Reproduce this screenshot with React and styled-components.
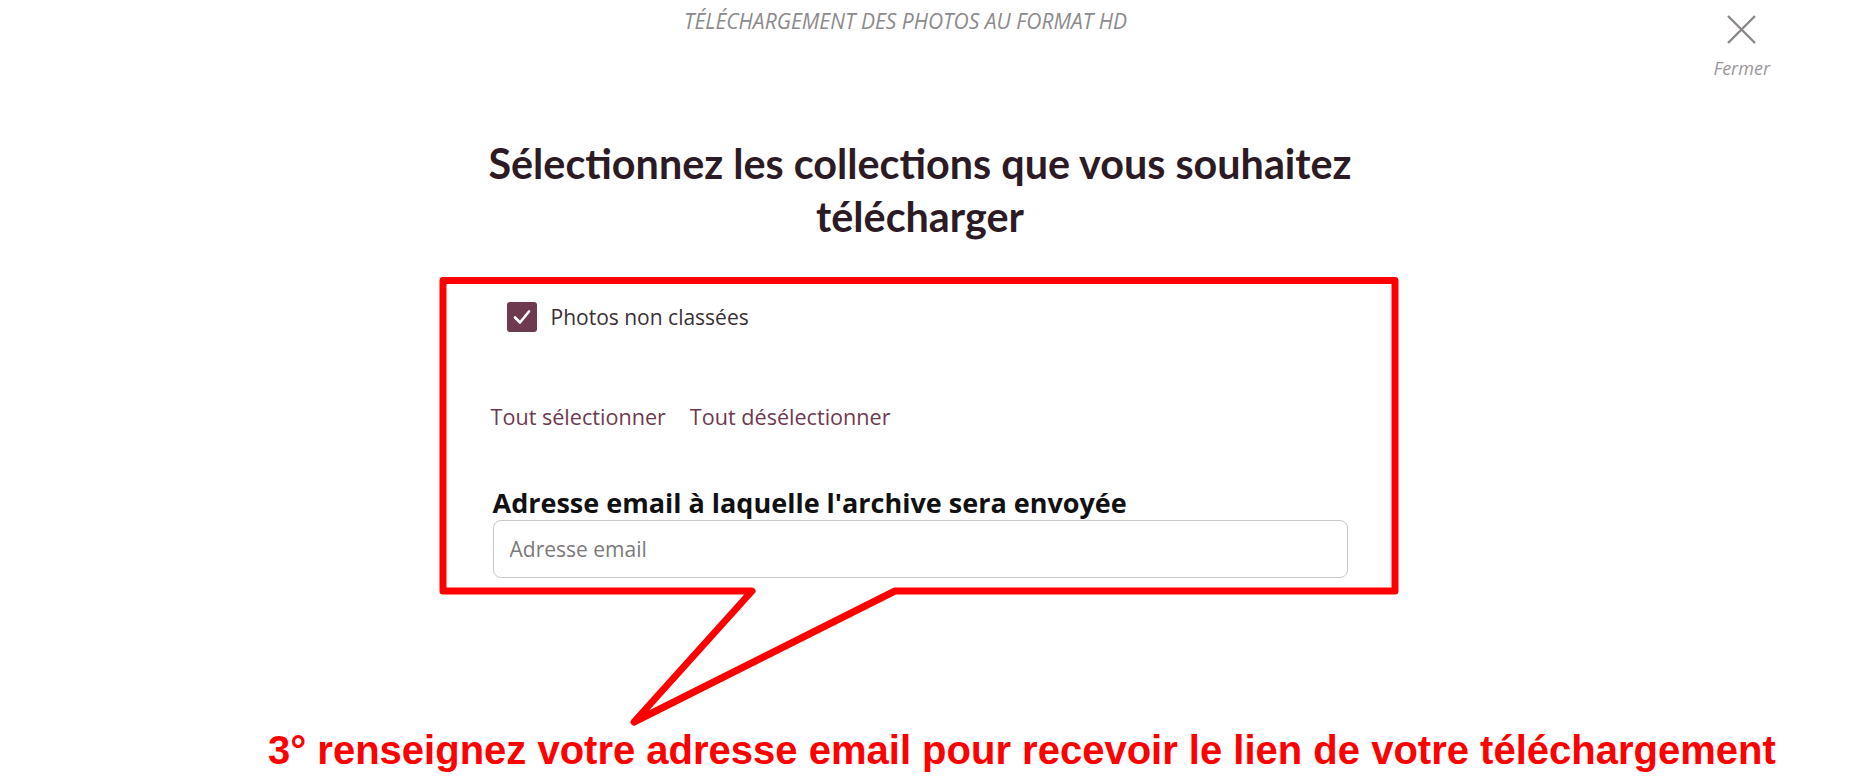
import React from 'react';
import styled, {createGlobalStyle} from "styled-components";

const GlobalStyle = createGlobalStyle`
  body {
    margin: 0;
    background: #ffffff;
    font-family: "Open Sans", "Noto Sans", sans-serif;
  }
`;

const Page = styled.div`
  position: relative;
  width: 100%;
  height: 781px;
  overflow: hidden;
  background: #fff;
`;

const TopBar = styled.div`
  display: grid;
  grid-template-columns: 1fr auto 1fr;
  height: 90px;
`;

const ModalTitle = styled.div`
  grid-column: 2;
  padding: 7px 40px 0 0;
  font-size: 21px;
  line-height: 28px;
  font-style: italic;
  color: #8c8a8c;
  text-transform: uppercase;
`;

const CloseButton = styled.button`
  grid-column: 3;
  justify-self: end;
  align-self: start;
  display: flex;
  flex-direction: column;
  align-items: center;
  gap: 12px;
  margin: 14px 81px 0 0;
  padding: 0;
  border: 0;
  background: none;
  cursor: pointer;
  font-family: inherit;
  font-style: italic;
  font-size: 18px;
  line-height: 22px;
  color: #9a9799;
`;

const Content = styled.div`
  width: 855px;
  margin-left: calc(50% - 433px);
`;

const Heading = styled.h1`
  margin: 47px -60px 0;
  font-family: Lato, "Open Sans", sans-serif;
  font-weight: 700;
  font-size: 41.3px;
  line-height: 53px;
  color: #2c1a25;
  text-align: center;
`;

const CheckRow = styled.label`
  display: flex;
  align-items: center;
  gap: 14px;
  margin-top: 59px;
  padding-left: 14px;
  font-size: 21px;
  line-height: 30px;
  color: #3a2f35;
`;

const CheckBox = styled.span`
  display: flex;
  align-items: center;
  justify-content: center;
  width: 30px;
  height: 30px;
  border-radius: 3px;
  background: ${p => p.checked ? "#6e3a50" : "#fff"};
`;

const Links = styled.div`
  display: flex;
  gap: 24px;
  margin: 70px 0 0 -2px;
`;

const LinkButton = styled.a`
  font-size: 21.6px;
  line-height: 30px;
  color: #6e3a50;
  cursor: pointer;
`;

const FieldLabel = styled.div`
  margin-top: 54px;
  font-size: 27px;
  line-height: 34px;
  font-weight: 700;
  color: #111;
`;

const EmailInput = styled.input`
  display: block;
  box-sizing: border-box;
  width: 100%;
  height: 58px;
  margin: 0;
  padding: 0 16px;
  border: 1px solid #c9c9c9;
  border-radius: 8px;
  font-family: inherit;
  font-size: 21px;
  color: #333;
  outline: none;

  &::placeholder {
    color: #7a7a7a;
  }
`;

const Callout = styled.svg`
  position: absolute;
  left: 0;
  top: 0;
  pointer-events: none;
`;

const CalloutText = styled.div`
  position: absolute;
  left: 268px;
  top: 726px;
  font-family: "Liberation Sans", Arial, sans-serif;
  font-weight: 700;
  font-size: 40px;
  line-height: 48px;
  color: #ff0000;
  white-space: nowrap;
`;

const CloseIcon = () => (
    <svg width="31" height="31" viewBox="0 0 31 31">
        <path d="M2 2 L29 29 M29 2 L2 29" stroke="#8b8789" strokeWidth="2.4" fill="none"/>
    </svg>
);

const CheckIcon = () => (
    <svg width="20" height="20" viewBox="0 0 20 20">
        <path d="M3 10.5 L8 15.5 L17 4.5" stroke="#fff" strokeWidth="2.6" fill="none"
              strokeLinecap="round" strokeLinejoin="round"/>
    </svg>
);

export default function App() {
    return (
        <Page>
            <GlobalStyle/>
            <TopBar>
                <ModalTitle>Téléchargement des photos au format HD</ModalTitle>
                <CloseButton type="button">
                    <CloseIcon/>
                    Fermer
                </CloseButton>
            </TopBar>

            <Content>
                <Heading>Sélectionnez les collections que vous souhaitez<br/>télécharger</Heading>

                <CheckRow>
                    <CheckBox checked><CheckIcon/></CheckBox>
                    Photos non classées
                </CheckRow>

                <Links>
                    <LinkButton>Tout sélectionner</LinkButton>
                    <LinkButton>Tout désélectionner</LinkButton>
                </Links>

                <FieldLabel>Adresse email à laquelle l'archive sera envoyée</FieldLabel>
                <EmailInput type="email" placeholder="Adresse email"/>
            </Content>

            {/* annotation drawn over the screenshot */}
            <Callout width="1851" height="781" viewBox="0 0 1851 781">
                <path d="M443 280.5 H1395 V591 H895 L634 722 L752 591 H443 Z"
                      stroke="#ff0000" strokeWidth="7" fill="none" strokeLinejoin="round"/>
            </Callout>
            <CalloutText>3° renseignez votre adresse email pour recevoir le lien de votre téléchargement</CalloutText>
        </Page>
    );
}
